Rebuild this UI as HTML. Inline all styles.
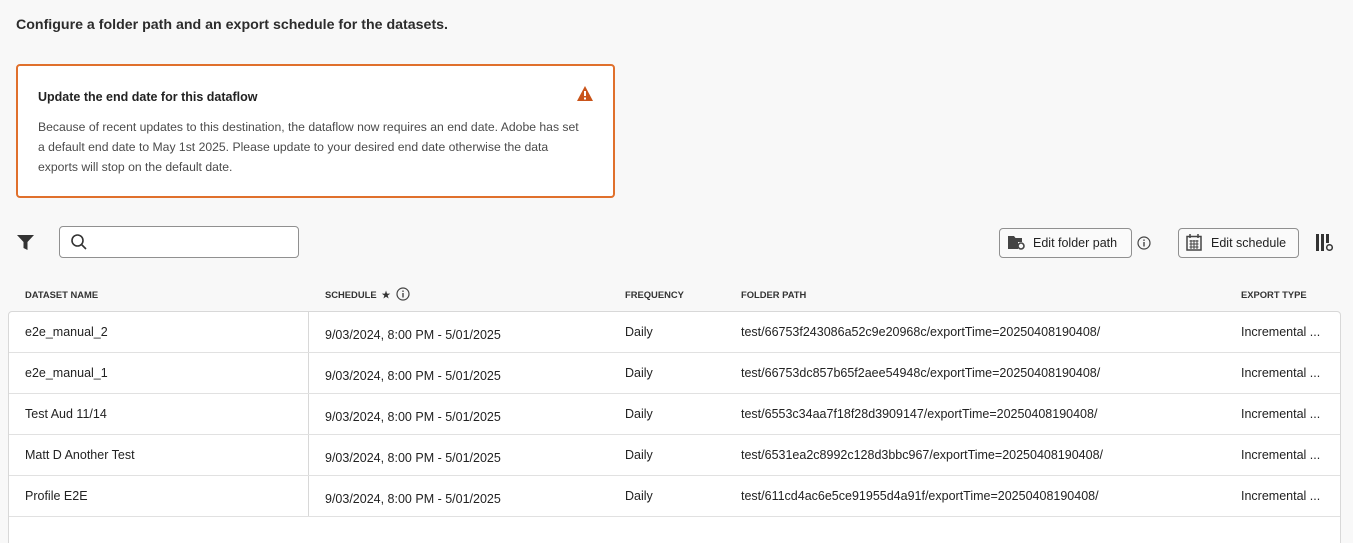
<!DOCTYPE html>
<html style="overflow:hidden;height:543px"><head><meta charset="utf-8"><style>
body{margin:0;width:1353px;height:543px;background:#f8f8f8;font-family:"Liberation Sans",sans-serif;color:#222;position:relative;overflow:hidden}
.a{position:absolute}
h1{position:absolute;left:16px;top:17px;margin:0;font-size:14.2px;font-weight:bold;color:#2c2c2c}
.warn{left:16px;top:64px;width:595px;height:130px;border:2px solid #e0702c;border-radius:4px;background:#fff}
.warn .t{left:20px;top:24px;font-size:12.5px;font-weight:bold}
.warn .b{left:20px;top:51px;width:549px;font-size:12.2px;line-height:20px;color:#4b4b4b}
.search{left:59px;top:226px;width:238px;height:30px;border:1px solid #909090;border-radius:4px;background:#fff}
.btn{height:30px;border:1px solid #909090;border-radius:4px;background:#fafafa;font-size:12.5px;line-height:29px;box-sizing:border-box}
.hd{top:289px;font-size:9.4px;font-weight:bold;color:#333}
.tbl{left:8px;top:311px;width:1331px;height:238px;border:1px solid #d8d8d8;border-radius:4px;background:#fff}
.row{position:absolute;left:0;width:1331px;height:40px;border-bottom:1px solid #e1e1e1;font-size:12.5px}
.row span{position:absolute;top:13px}
.vl{position:absolute;left:299px;top:0;width:1px;height:205px;background:#d8d8d8}
</style></head><body>
<h1>Configure a folder path and an export schedule for the datasets.</h1>
<div class="a warn">
<div class="a t">Update the end date for this dataflow</div>
<svg class="a" style="left:558px;top:19px" width="18" height="17" viewBox="0 0 18 17"><path d="M9 1L17 16H1Z" fill="#c9541a"/><rect x="8" y="6" width="2" height="5" fill="#fff"/><rect x="8" y="12.5" width="2" height="2" fill="#fff"/></svg>
<div class="a b">Because of recent updates to this destination, the dataflow now requires an end date. Adobe has set a default end date to May 1st 2025. Please update to your desired end date otherwise the data exports will stop on the default date.</div>
</div>
<svg class="a" style="left:17px;top:235px" width="17" height="15" viewBox="0 0 17 15"><path d="M0 0H17L10.5 7V15L6.5 13V7Z" fill="#333"/></svg>
<div class="a search"><svg class="a" style="left:10px;top:6px" width="18" height="18" viewBox="0 0 18 18"><circle cx="7.5" cy="7.5" r="5.5" fill="none" stroke="#333" stroke-width="1.6"/><path d="M11.5 11.5L16 16" stroke="#333" stroke-width="1.6"/></svg></div>
<div class="a btn" style="left:999px;top:228px;width:133px;padding-left:33px">Edit folder path</div>
<svg class="a" style="left:1008px;top:235px" width="18" height="16" viewBox="0 0 18 16"><path d="M0 1H6L7.5 3H14V7H10V14H0Z" fill="#444"/><circle cx="13" cy="11" r="3" fill="none" stroke="#444" stroke-width="1.6"/></svg>
<svg class="a" style="left:1137px;top:236px" width="14" height="14"><circle cx="7" cy="7" r="6" fill="none" stroke="#444" stroke-width="1.2"/><rect x="6.3" y="6" width="1.4" height="4.5" fill="#444"/><rect x="6.3" y="3.5" width="1.4" height="1.4" fill="#444"/></svg>
<div class="a btn" style="left:1178px;top:228px;width:121px;padding-left:32px">Edit schedule</div>
<svg class="a" style="left:1186px;top:234px" width="16" height="17" viewBox="0 0 16 17"><rect x="1" y="2.5" width="14" height="13.5" fill="none" stroke="#444" stroke-width="1.5"/><path d="M4 0V4M12 0V4" stroke="#444" stroke-width="1.5"/><path d="M3.5 7h9M3.5 10h9M3.5 13h9M5 6v9M8 6v9M11 6v9" stroke="#444" stroke-width="1"/></svg>
<svg class="a" style="left:1316px;top:234px" width="18" height="18" viewBox="0 0 18 18"><rect x="0" y="0" width="3" height="17" fill="#333"/><rect x="5" y="0" width="3" height="17" fill="#333"/><rect x="10" y="0" width="3" height="9" fill="#333"/><circle cx="13.5" cy="13.5" r="2.8" fill="none" stroke="#333" stroke-width="1.5"/></svg>
<div class="a hd" style="left:25px">DATASET NAME</div>
<div class="a hd" style="left:325px">SCHEDULE &nbsp;★</div>
<svg class="a" style="left:396px;top:287px" width="14" height="14"><circle cx="7" cy="7" r="6" fill="none" stroke="#444" stroke-width="1.2"/><rect x="6.3" y="6" width="1.4" height="4.5" fill="#444"/><rect x="6.3" y="3.5" width="1.4" height="1.4" fill="#444"/></svg>
<div class="a hd" style="left:625px">FREQUENCY</div>
<div class="a hd" style="left:741px">FOLDER PATH</div>
<div class="a hd" style="left:1241px">EXPORT TYPE</div>
<div class="a tbl">
<div class="vl"></div>
<div class="row" style="top:0"><span style="left:16px">e2e_manual_2</span><span style="left:316px;top:16px">9/03/2024, 8:00 PM - 5/01/2025</span><span style="left:616px">Daily</span><span style="left:732px">test/66753f243086a52c9e20968c/exportTime=20250408190408/</span><span style="left:1232px">Incremental ...</span></div>
<div class="row" style="top:41px"><span style="left:16px">e2e_manual_1</span><span style="left:316px;top:16px">9/03/2024, 8:00 PM - 5/01/2025</span><span style="left:616px">Daily</span><span style="left:732px">test/66753dc857b65f2aee54948c/exportTime=20250408190408/</span><span style="left:1232px">Incremental ...</span></div>
<div class="row" style="top:82px"><span style="left:16px">Test Aud 11/14</span><span style="left:316px;top:16px">9/03/2024, 8:00 PM - 5/01/2025</span><span style="left:616px">Daily</span><span style="left:732px">test/6553c34aa7f18f28d3909147/exportTime=20250408190408/</span><span style="left:1232px">Incremental ...</span></div>
<div class="row" style="top:123px"><span style="left:16px">Matt D Another Test</span><span style="left:316px;top:16px">9/03/2024, 8:00 PM - 5/01/2025</span><span style="left:616px">Daily</span><span style="left:732px">test/6531ea2c8992c128d3bbc967/exportTime=20250408190408/</span><span style="left:1232px">Incremental ...</span></div>
<div class="row" style="top:164px"><span style="left:16px">Profile E2E</span><span style="left:316px;top:16px">9/03/2024, 8:00 PM - 5/01/2025</span><span style="left:616px">Daily</span><span style="left:732px">test/611cd4ac6e5ce91955d4a91f/exportTime=20250408190408/</span><span style="left:1232px">Incremental ...</span></div>
</div>
</body></html>
